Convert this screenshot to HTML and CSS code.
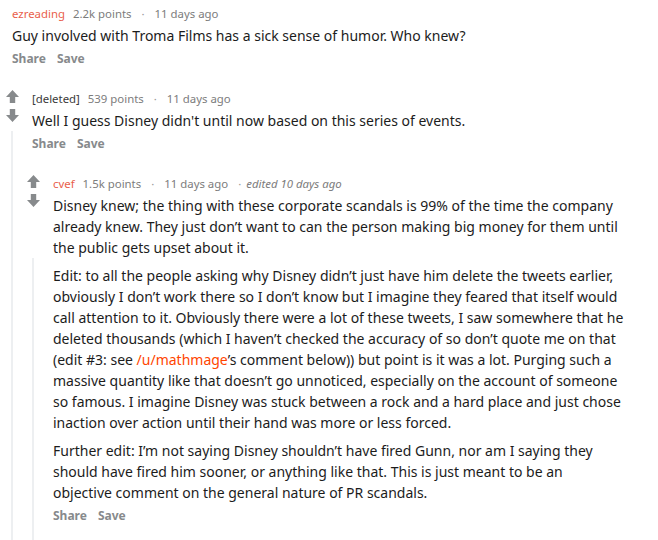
FILE: index.html
```html
<!DOCTYPE html>
<html>
<head>
<meta charset="utf-8">
<link rel="stylesheet" href="styles.css">
</head>
<body>
<div class="page">
  <div class="comment top">
    <div class="meta"><span class="user">ezreading</span><span class="pts">2.2k points</span><span class="sep">·</span><span class="time">11 days ago</span></div>
    <div class="body"><p>Guy involved with Troma Films has a sick sense of humor. Who knew?</p></div>
    <div class="actions"><span>Share</span><span>Save</span></div>
  </div>

  <div class="comment c2">
    <div class="head">
      <div class="rail">
        <svg class="arrow" viewBox="0 0 12 12"><path d="M6 0 L12 6.5 H8.5 V12 H3.5 V6.5 H0 Z"/></svg>
        <svg class="arrow" viewBox="0 0 12 12"><path d="M6 12 L12 5.5 H8.5 V0 H3.5 V5.5 H0 Z"/></svg>
      </div>
      <div class="main">
        <div class="meta"><span class="user deleted">[deleted]</span><span class="pts">539 points</span><span class="sep">·</span><span class="time">11 days ago</span></div>
        <div class="body"><p>Well I guess Disney didn't until now based on this series of events.</p></div>
      </div>
    </div>
    <div class="thread">
      <div class="actions"><span>Share</span><span>Save</span></div>

      <div class="comment c3">
        <div class="head">
          <div class="rail">
            <svg class="arrow" viewBox="0 0 12 12"><path d="M6 0 L12 6.5 H8.5 V12 H3.5 V6.5 H0 Z"/></svg>
            <svg class="arrow" viewBox="0 0 12 12"><path d="M6 12 L12 5.5 H8.5 V0 H3.5 V5.5 H0 Z"/></svg>
          </div>
          <div class="main">
            <div class="meta"><span class="user">cvef</span><span class="pts">1.5k points</span><span class="sep">·</span><span class="time">11 days ago</span><span class="sep">·</span><span class="edited">edited 10 days ago</span></div>
            <div class="body">
              <p>Disney knew; the thing with these corporate scandals is 99% of the time the company<br>already knew. They just don’t want to can the person making big money for them until<br>the public gets upset about it.</p>
            </div>
          </div>
        </div>
        <div class="thread last">
          <div class="body more">
            <p>Edit: to all the people asking why Disney didn’t just have him delete the tweets earlier,<br>obviously I don’t work there so I don’t know but I imagine they feared that itself would<br>call attention to it. Obviously there were a lot of these tweets, I saw somewhere that he<br>deleted thousands (which I haven’t checked the accuracy of so don’t quote me on that<br>(edit #3: see <a class="link">/u/mathmage</a>’s comment below)) but point is it was a lot. Purging such a<br>massive quantity like that doesn’t go unnoticed, especially on the account of someone<br>so famous. I imagine Disney was stuck between a rock and a hard place and just chose<br>inaction over action until their hand was more or less forced.</p>
            <p>Further edit: I’m not saying Disney shouldn’t have fired Gunn, nor am I saying they<br>should have fired him sooner, or anything like that. This is just meant to be an<br>objective comment on the general nature of PR scandals.</p>
          </div>
          <div class="actions"><span>Share</span><span>Save</span></div>
        </div>
      </div>
    </div>
  </div>
</div>
</body>
</html>
```
FILE: styles.css
```css
* { box-sizing: border-box; }
html, body { margin: 0; padding: 0; background: #fff; }
body {
  font-family: "Noto Sans", "Open Sans", sans-serif;
  color: #1c1c1c;
  width: 658px;
  height: 540px;
  overflow: hidden;
}
.page { padding-right: 4px; }

.comment.top { padding-left: 12px; margin-bottom: 17px; }

.meta {
  font-size: 11.4px;
  line-height: 20px;
  padding-top: 4px;
  margin-bottom: 1px;
  color: #7c7c7c;
  white-space: nowrap;
}
.meta .user { color: #e9604b; margin-right: 8px; }
.meta .user.deleted { color: #3a3a3a; }
.meta .sep { margin: 0 10px; color: #9a9a9a; }
.meta .edited { font-style: italic; margin-left: -5px; }

.body { font-size: 14px; line-height: 21px; }
.body p { margin: 0; }
.body p + p { margin-top: 7px; }
.body.more { padding-left: 19px; padding-top: 7px; }

.link { color: #ff4500; text-decoration: none; }

.actions {
  font-size: 12px;
  font-weight: 700;
  line-height: 18px;
  padding-top: 4px;
  color: #878a8c;
  display: flex;
  gap: 11px;
}

.head { display: flex; }
.rail {
  width: 24px;
  flex: none;
  display: flex;
  flex-direction: column;
  align-items: center;
  padding-top: 5px;
  gap: 6px;
}
.arrow { width: 13px; height: 13px; fill: #878a8c; display: block; }
.main { flex: 1; padding-left: 8px; }

.thread {
  margin-left: 11px;
  border-left: 2px solid #edeff1;
  padding-left: 8px;
}
.c2 > .thread > .actions { padding-left: 11px; }
.c3 { margin-top: 17px; }
.thread.last { padding-bottom: 40px; padding-left: 0; }
.thread.last .actions { padding-left: 19px; }
```
